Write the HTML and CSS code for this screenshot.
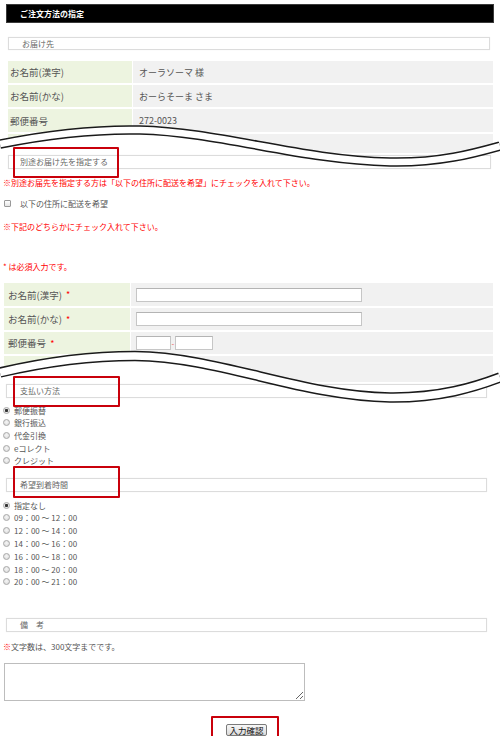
FILE: index.html
```html
<!DOCTYPE html>
<html lang="ja">
<head>
<meta charset="utf-8">
<title>ご注文方法の指定</title>
<link rel="stylesheet" href="styles.css">
</head>
<body>
<div class="page">
  <div class="head">ご注文方法の指定</div>

  <div class="sec sec-top">お届け先</div>
  <div class="grid info">
    <div class="lab">お名前(漢字)</div><div class="val">オーラソーマ 様</div>
    <div class="lab">お名前(かな)</div><div class="val">おーらそーま さま</div>
    <div class="lab">郵便番号</div><div class="val">272-0023</div>
    <div class="lab"></div><div class="val"></div>
  </div>

  <div class="sec sec-alt">別途お届け先を指定する<span class="mark mark-alt"></span></div>
  <p class="note note1">※別途お届先を指定する方は「以下の住所に配送を希望」にチェックを入れて下さい。</p>
  <label class="chk"><input type="checkbox" class="box"><span>以下の住所に配送を希望</span></label>
  <p class="note note2">※下記のどちらかにチェック入れて下さい。</p>
  <p class="note note3">* は必須入力です。</p>

  <div class="grid form">
    <div class="lab">お名前(漢字) <em>*</em></div><div class="val"><input type="text" class="txt wide"></div>
    <div class="lab">お名前(かな) <em>*</em></div><div class="val"><input type="text" class="txt wide"></div>
    <div class="lab">郵便番号 <em>*</em></div><div class="val"><input type="text" class="txt zip1"><span class="dash">-</span><input type="text" class="txt zip2"></div>
    <div class="lab"></div><div class="val"></div>
  </div>

  <div class="sec sec-pay">支払い方法<span class="mark mark-pay"></span></div>
  <div class="opts opts-pay">
    <label class="opt"><input type="radio" name="pay" class="rad" checked><span>郵便振替</span></label>
    <label class="opt"><input type="radio" name="pay" class="rad"><span>銀行振込</span></label>
    <label class="opt"><input type="radio" name="pay" class="rad"><span>代金引換</span></label>
    <label class="opt"><input type="radio" name="pay" class="rad"><span>eコレクト</span></label>
    <label class="opt"><input type="radio" name="pay" class="rad"><span>クレジット</span></label>
  </div>

  <div class="sec sec-time">希望到着時間<span class="mark mark-time"></span></div>
  <div class="opts opts-time">
    <label class="opt"><input type="radio" name="time" class="rad" checked><span>指定なし</span></label>
    <label class="opt"><input type="radio" name="time" class="rad"><span>09：00 ～ 12：00</span></label>
    <label class="opt"><input type="radio" name="time" class="rad"><span>12：00 ～ 14：00</span></label>
    <label class="opt"><input type="radio" name="time" class="rad"><span>14：00 ～ 16：00</span></label>
    <label class="opt"><input type="radio" name="time" class="rad"><span>16：00 ～ 18：00</span></label>
    <label class="opt"><input type="radio" name="time" class="rad"><span>18：00 ～ 20：00</span></label>
    <label class="opt"><input type="radio" name="time" class="rad"><span>20：00 ～ 21：00</span></label>
  </div>

  <div class="sec sec-memo">備　考</div>
  <p class="count"><em>※</em>文字数は、300文字までです。</p>
  <textarea class="memo"></textarea>

  <div class="submit">
    <span class="btnwrap"><button type="button" class="btn">入力確認</button><span class="mark mark-btn"></span></span>
  </div>

  <svg class="wave wave1" viewBox="0 110 500 70" width="500" height="70" aria-hidden="true">
    <defs><clipPath id="clip1"><rect x="0" y="110" width="500" height="44"/></clipPath></defs>
    <path clip-path="url(#clip1)" fill="#fff" d="M0,148 C50,138 95,133 140,134 C220,136 300,164 390,166 C440,167 475,157 500,150 L500,190 L0,190 Z"/>
    <path fill="none" stroke="#1a1a1a" stroke-width="9.5" d="M0,144 C50,134 95,129 140,130 C220,132 300,160 390,162 C440,163 475,153 500,146"/>
    <path fill="none" stroke="#fff" stroke-width="6.5" d="M0,144 C50,134 95,129 140,130 C220,132 300,160 390,162 C440,163 475,153 500,146"/>
  </svg>

  <svg class="wave wave2" viewBox="0 340 500 70" width="500" height="70" aria-hidden="true">
    <defs><clipPath id="clip2"><rect x="0" y="340" width="500" height="43"/></clipPath></defs>
    <path clip-path="url(#clip2)" fill="#fff" d="M0,377 C45,366.5 90,360.5 135,360.5 C220,361.5 300,400.5 390,402 C440,402.5 475,391.5 500,382 L500,420 L0,420 Z"/>
    <path fill="none" stroke="#1a1a1a" stroke-width="10.5" d="M0,372.5 C45,362 90,356 135,356 C220,357 300,396 390,397.5 C440,398 475,387 500,377.5"/>
    <path fill="none" stroke="#fff" stroke-width="7.5" d="M0,372.5 C45,362 90,356 135,356 C220,357 300,396 390,397.5 C440,398 475,387 500,377.5"/>
  </svg>
</div>
</body>
</html>
```

FILE: styles.css
```css
html, body {
  margin: 0;
  padding: 0;
  background: #fff;
}
body {
  font-family: "Noto Sans CJK JP", "Noto Sans", sans-serif;
  color: #555;
  overflow: hidden;
}
.page {
  position: relative;
  width: 500px;
  display: flex;
  flex-direction: column;
  align-items: flex-start;
}
.head {
  box-sizing: border-box;
  margin: 4px 0 0 6px;
  width: 488px;
  height: 19px;
  background: #000;
  border: 1px solid #3a3a3a;
  color: #fff;
  font-size: 8px;
  font-weight: bold;
  line-height: 17px;
  padding-left: 13px;
}
.sec {
  position: relative;
  box-sizing: border-box;
  height: 14px;
  border: 1px solid #dcdcdc;
  box-shadow: 0 0 1px #eee;
  background: #fff;
  font-size: 8px;
  line-height: 12px;
  color: #666;
  padding-left: 12px;
}
.sec-top { margin: 14px 0 0 8px; width: 482px; height: 13px; line-height: 11px; padding-left: 13px; }
.sec-alt { margin: 2px 0 0 8px; width: 483px; padding-left: 11px; }
.sec-pay { margin: 2px 0 0 6px; width: 481px; padding-left: 13px; }
.sec-time { margin: 11px 0 0 6px; width: 481px; padding-left: 13px; }
.sec-memo { margin: 30px 0 0 6px; width: 481px; padding-left: 13px; }

.mark {
  position: absolute;
  box-sizing: border-box;
  border: 2px solid #c9000b;
  border-radius: 1px;
  z-index: 5;
}
.mark-alt { left: 4px; top: -9px; width: 106px; height: 31px; }
.mark-pay { left: 6px; top: -9px; width: 107px; height: 31px; }
.mark-time { left: 6px; top: -13px; width: 107px; height: 32px; }
.mark-btn { left: -15px; top: -8px; width: 68px; height: 28px; }

.grid {
  display: grid;
  column-gap: 1px;
  row-gap: 2px;
}
.info {
  margin: 11px 0 0 8px;
  width: 485px;
  grid-template-columns: 124px 1fr;
  grid-template-rows: 22px 22px 23px 19px;
}
.form {
  margin: 10px 0 0 4px;
  width: 489px;
  grid-template-columns: 126px 1fr;
  grid-template-rows: 23px 22px 22px 26px;
}
.lab {
  background: #edf4e0;
  display: flex;
  align-items: center;
  font-size: 9.5px;
  color: #555;
  white-space: pre;
}
.val {
  background: #f1f1f1;
  display: flex;
  align-items: center;
  font-size: 9px;
  color: #555;
}
.info .lab { padding-left: 2px; }
.info .val { padding-left: 6px; }
.form .lab { padding-left: 4px; }
.form .val { padding-left: 5px; }
.lab em { color: #f00; font-style: normal; font-size: 9px; margin-left: 2px; }

.txt {
  box-sizing: border-box;
  height: 14px;
  margin: 0;
  padding: 0 2px;
  border: 1px solid #c6c6c6;
  border-top-color: #b4b4b4;
  background: #fff;
  font-size: 8px;
  outline: none;
}
.wide { width: 226px; }
.zip1 { width: 35px; }
.zip2 { width: 38px; }
.dash { color: #e55; font-size: 8px; width: 4px; text-align: center; }

.note {
  margin: 0 0 0 3px;
  font-size: 8px;
  line-height: 12px;
  color: #f00;
}
.note1 { margin-top: 8px; }
.note2 { margin-top: 12px; }
.note3 { margin-top: 28px; }

.chk {
  margin: 8px 0 0 4px;
  height: 12px;
  display: flex;
  align-items: center;
  gap: 9px;
  font-size: 8px;
  color: #555;
}
.box {
  appearance: none;
  -webkit-appearance: none;
  box-sizing: border-box;
  width: 7px;
  height: 7px;
  margin: 0;
  border: 1px solid #999;
  border-radius: 1px;
  background: linear-gradient(#fff, #e4e4e4);
}

.opts {
  display: flex;
  flex-direction: column;
  margin-left: 3px;
}
.opts-pay { margin-top: 6px; }
.opts-time { margin-top: 6.7px; }
.opt {
  display: flex;
  align-items: center;
  gap: 4px;
  height: 12.6px;
  font-size: 8px;
  color: #555;
}
.opts-time .opt { height: 12.8px; }
.rad {
  appearance: none;
  -webkit-appearance: none;
  box-sizing: border-box;
  width: 7px;
  height: 7px;
  margin: 0;
  border: 1px solid #a8a8a8;
  border-radius: 50%;
  background: radial-gradient(circle at 50% 40%, #f6f6f6, #d8d8d8);
}
.rad:checked {
  background: radial-gradient(circle, #333 0, #333 1.3px, #e8e8e8 1.9px);
}

.count {
  margin: 8.4px 0 0 3px;
  font-size: 8px;
  line-height: 12px;
  color: #555;
}
.count em { color: #f00; font-style: normal; }

.memo {
  box-sizing: border-box;
  margin: 10px 0 0 4px;
  width: 301px;
  height: 38.5px;
  border: 1px solid #bdbdbd;
  background: #fff;
  padding: 2px;
  font-size: 8px;
  display: block;
}

.submit {
  width: 493px;
  margin-top: 23px;
  display: flex;
  justify-content: center;
}
.btnwrap {
  position: relative;
  display: inline-block;
}
.btn {
  box-sizing: border-box;
  display: block;
  height: 12px;
  padding: 0 2px;
  margin: 0;
  border: 1px solid #7a7a7a;
  border-radius: 2px;
  background: linear-gradient(#f7f7f7, #dadada);
  font-family: "Noto Sans CJK JP", sans-serif;
  font-size: 8.5px;
  line-height: 10px;
  color: #111;
}

.wave {
  position: absolute;
  left: 0;
  width: 500px;
  height: 70px;
  z-index: 3;
  overflow: visible;
}
.wave1 { top: 110px; }
.wave2 { top: 340px; }
```
